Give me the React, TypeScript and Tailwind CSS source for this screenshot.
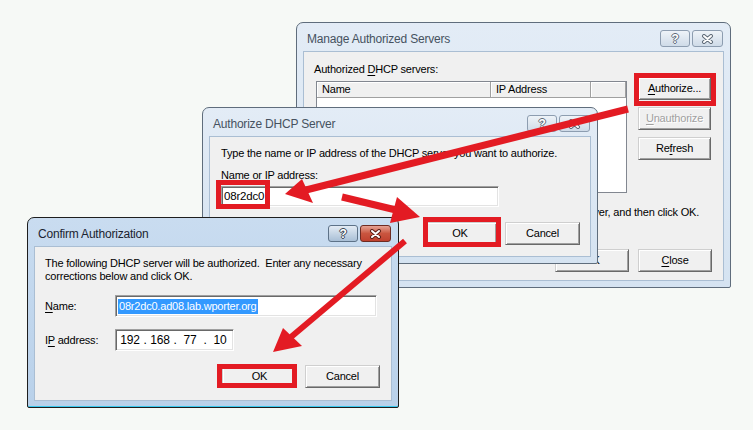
import React from "react";

// underlined mnemonic letter
function U({ children }: { children: React.ReactNode }) {
  return <span className="underline decoration-1 underline-offset-[2px]">{children}</span>;
}

function XGlyph({ dark }: { dark: string }) {
  return (
    <svg width="13" height="10" viewBox="0 0 13 10">
      <path d="M3 2 L10 8 M10 2 L3 8" stroke={dark} strokeWidth="4" strokeLinecap="round" fill="none" />
      <path d="M3 2 L10 8 M10 2 L3 8" stroke="#ffffff" strokeWidth="2" strokeLinecap="round" fill="none" />
    </svg>
  );
}

function CapButtons({ active }: { active: boolean }) {
  const help = active
    ? "flex h-[17px] w-[30px] items-center justify-center rounded-[3px] border border-[#5d7288] bg-gradient-to-b from-[#e3ebf4] to-[#a9bfd6]"
    : "flex h-[17px] w-[30px] items-center justify-center rounded-[3px] border border-[#8d9db0] bg-gradient-to-b from-[#eef3f8] to-[#cfdbe8]";
  const close = active
    ? "flex h-[17px] w-[31px] items-center justify-center rounded-[3px] border border-[#6e2b22] bg-gradient-to-b from-[#e5a294] via-[#c9553f] to-[#c0412f]"
    : "flex h-[17px] w-[31px] items-center justify-center rounded-[3px] border border-[#8d9db0] bg-gradient-to-b from-[#eef3f8] to-[#cfdbe8]";
  const outline = active ? "#3a4452" : "#5f6b78";
  return (
    <div className="ml-auto flex gap-[2px] pr-[1px]">
      <div className={help}>
        <span
          className="text-[12px] leading-none font-bold text-white"
          style={{ textShadow: `1px 0 ${outline}, -1px 0 ${outline}, 0 1px ${outline}, 0 -1px ${outline}` }}
        >
          ?
        </span>
      </div>
      <div className={close}>
        <XGlyph dark={active ? "#5a2018" : "#5f6b78"} />
      </div>
    </div>
  );
}

function Win({
  title,
  active = false,
  pos,
  children,
}: {
  title: string;
  active?: boolean;
  pos: string;
  children: React.ReactNode;
}) {
  return (
    <div
      className={`absolute flex flex-col rounded-t-[7px] rounded-b-[2px] border px-[6px] pb-[6px] ${
        active
          ? "border-[#1e1e1e] bg-gradient-to-b from-[#c9dcf0] to-[#b9d1ea] shadow-[inset_0_-1px_0_#38c8ee]"
          : "border-[#5f6d7c] bg-gradient-to-b from-[#e3ecf6] to-[#d5e3f1]"
      } ${pos}`}
    >
      <div className="flex h-[28px] shrink-0 items-center pt-[3px]">
        <span className={`pl-[4px] text-[12px] ${active ? "text-[#1b2430]" : "text-[#46525f]"}`}>{title}</span>
        <CapButtons active={active} />
      </div>
      <div className="flex-1 border border-[#aabed3] bg-[#f0f0f0]">{children}</div>
    </div>
  );
}

function Btn({ children, w = "w-[74px]", disabled = false }: { children: React.ReactNode; w?: string; disabled?: boolean }) {
  return (
    <div
      className={`flex h-[23px] items-center justify-center border border-t-[#cfcfcf] border-l-[#cfcfcf] border-b-[#696969] border-r-[#696969] bg-[#f0f0f0] shadow-[inset_1px_1px_0_#ffffff,inset_-1px_-1px_0_#a0a0a0] ${w} ${
        disabled ? "text-[#a0a0a0] [text-shadow:1px_1px_0_#ffffff]" : "text-black"
      }`}
    >
      {children}
    </div>
  );
}

function Field({ w, h = "h-[22px]", children }: { w: string; h?: string; children?: React.ReactNode }) {
  return (
    <div
      className={`flex items-center border border-t-[#a0a0a0] border-l-[#a0a0a0] border-b-white border-r-white bg-white pl-[2px] shadow-[inset_1px_1px_0_#696969,inset_-1px_-1px_0_#e3e3e3] ${w} ${h}`}
    >
      {children}
    </div>
  );
}

function HeaderCell({ w, children }: { w: string; children?: React.ReactNode }) {
  return (
    <div
      className={`flex h-[16px] items-center border-r border-b border-r-[#a0a0a0] border-b-[#a0a0a0] bg-[#f0f0f0] pl-[5px] shadow-[inset_1px_1px_0_#ffffff] ${w}`}
    >
      {children}
    </div>
  );
}

export default function App() {
  const octets = ["192", "168", "77", "10"];

  return (
    <div className="relative h-[430px] w-[753px] overflow-hidden bg-[#f6f9f6] font-['Liberation_Sans',Arial,sans-serif] text-[11px] tracking-[-0.2px] text-black">
      {/* Manage Authorized Servers */}
      <Win title="Manage Authorized Servers" pos="left-[296px] top-[22px] h-[266px] w-[435px]">
        <div className="flex h-full flex-col pt-[10px] pr-[11px] pl-[10px]">
          <div className="flex">
            <div className="flex flex-col">
              <span className="h-[15px] leading-[15px]">
                Authorized <U>D</U>HCP servers:
              </span>
              <div className="mt-[4px] ml-[2px] flex h-[112px] w-[311px] flex-col border border-[#828790] bg-white">
                <div className="flex">
                  <HeaderCell w="w-[174px]">Name</HeaderCell>
                  <HeaderCell w="w-[100px]">IP Address</HeaderCell>
                  <HeaderCell w="flex-1" />
                </div>
              </div>
            </div>
            <div className="mt-[15px] ml-[11px] flex flex-col gap-[7px]">
              <Btn w="w-[73px]">
                <U>A</U>uthorize...
              </Btn>
              <Btn w="w-[73px]" disabled>
                <U>U</U>nauthorize
              </Btn>
              <Btn w="w-[73px]">
                Re<U>f</U>resh
              </Btn>
            </div>
          </div>
          <p className="mt-[12px] pr-[13px] text-right leading-[14px] whitespace-nowrap">
            To add a server to the console, select the server, and then click OK.
          </p>
          <div className="mt-auto mb-[8px] flex justify-end gap-[9px]">
            <Btn>OK</Btn>
            <Btn>
              <U>C</U>lose
            </Btn>
          </div>
        </div>
      </Win>

      {/* Authorize DHCP Server */}
      <Win title="Authorize DHCP Server" pos="left-[202px] top-[107px] h-[157px] w-[396px]">
        <div className="flex h-full flex-col pt-[9px] pr-[10px] pl-[11px]">
          <span className="h-[15px] leading-[15px]">
            Type the name or IP address of the DHCP server you want to authorize.
          </span>
          <span className="mt-[7px] h-[15px] leading-[15px]">Name or IP address:</span>
          <div className="mt-[3px]">
            <Field w="w-[278px]" h="h-[21px]">
              <span className="text-[11.5px]">08r2dc0</span>
            </Field>
          </div>
          <div className="mt-[15px] flex justify-end gap-[8px]">
            <Btn>OK</Btn>
            <Btn w="w-[75px]">Cancel</Btn>
          </div>
        </div>
      </Win>

      {/* Confirm Authorization */}
      <Win title="Confirm Authorization" active pos="left-[27px] top-[217px] h-[191px] w-[372px]">
        <div className="flex h-full flex-col pt-[10px] pr-[11px] pl-[10px]">
          <p className="leading-[13px] whitespace-nowrap">
            The following DHCP server will be authorized.&nbsp; Enter any necessary
            <br />
            corrections below and click OK.
          </p>
          <div className="mt-[12px] flex items-center">
            <span className="w-[70px]">
              <U>N</U>ame:
            </span>
            <Field w="w-[262px]">
              <span className="bg-[#3399ff] px-[1px] leading-[15px] text-white">08r2dc0.ad08.lab.wporter.org</span>
            </Field>
          </div>
          <div className="mt-[12px] flex items-center">
            <span className="w-[70px]">
              I<U>P</U> address:
            </span>
            <Field w="w-[119px]">
              {octets.map((o, i) => (
                <React.Fragment key={o}>
                  <span className="w-[24px] text-center text-[12px]">{o}</span>
                  {i < 3 && <span className="w-[6px] text-center text-[12px]">.</span>}
                </React.Fragment>
              ))}
            </Field>
          </div>
          <div className="mt-[14px] flex justify-end gap-[8px]">
            <Btn w="w-[75px]">OK</Btn>
            <Btn w="w-[75px]">Cancel</Btn>
          </div>
        </div>
      </Win>

      {/* red annotations */}
      <svg className="pointer-events-none absolute inset-0" width="753" height="430" viewBox="0 0 753 430">
        <g fill="none" stroke="#e31b23" strokeWidth="5">
          <rect x="636.5" y="75.5" width="77" height="28" />
          <rect x="218.5" y="182.5" width="49" height="24" />
          <rect x="425.5" y="219.5" width="73" height="25" />
          <rect x="219.5" y="366.5" width="75" height="19" />
        </g>
        <g stroke="#e31b23" strokeLinecap="butt" fill="none">
          <line x1="628" y1="109" x2="306" y2="190" strokeWidth="7" />
          <line x1="342" y1="197" x2="396" y2="210" strokeWidth="7" />
          <line x1="405" y1="241" x2="291" y2="337" strokeWidth="6" />
        </g>
        <g fill="#e31b23">
          <polygon points="285,194 302,179 313,203" />
          <polygon points="420,217 397,197 390,223" />
          <polygon points="273,352 283,328 302,346" />
        </g>
      </svg>
    </div>
  );
}
